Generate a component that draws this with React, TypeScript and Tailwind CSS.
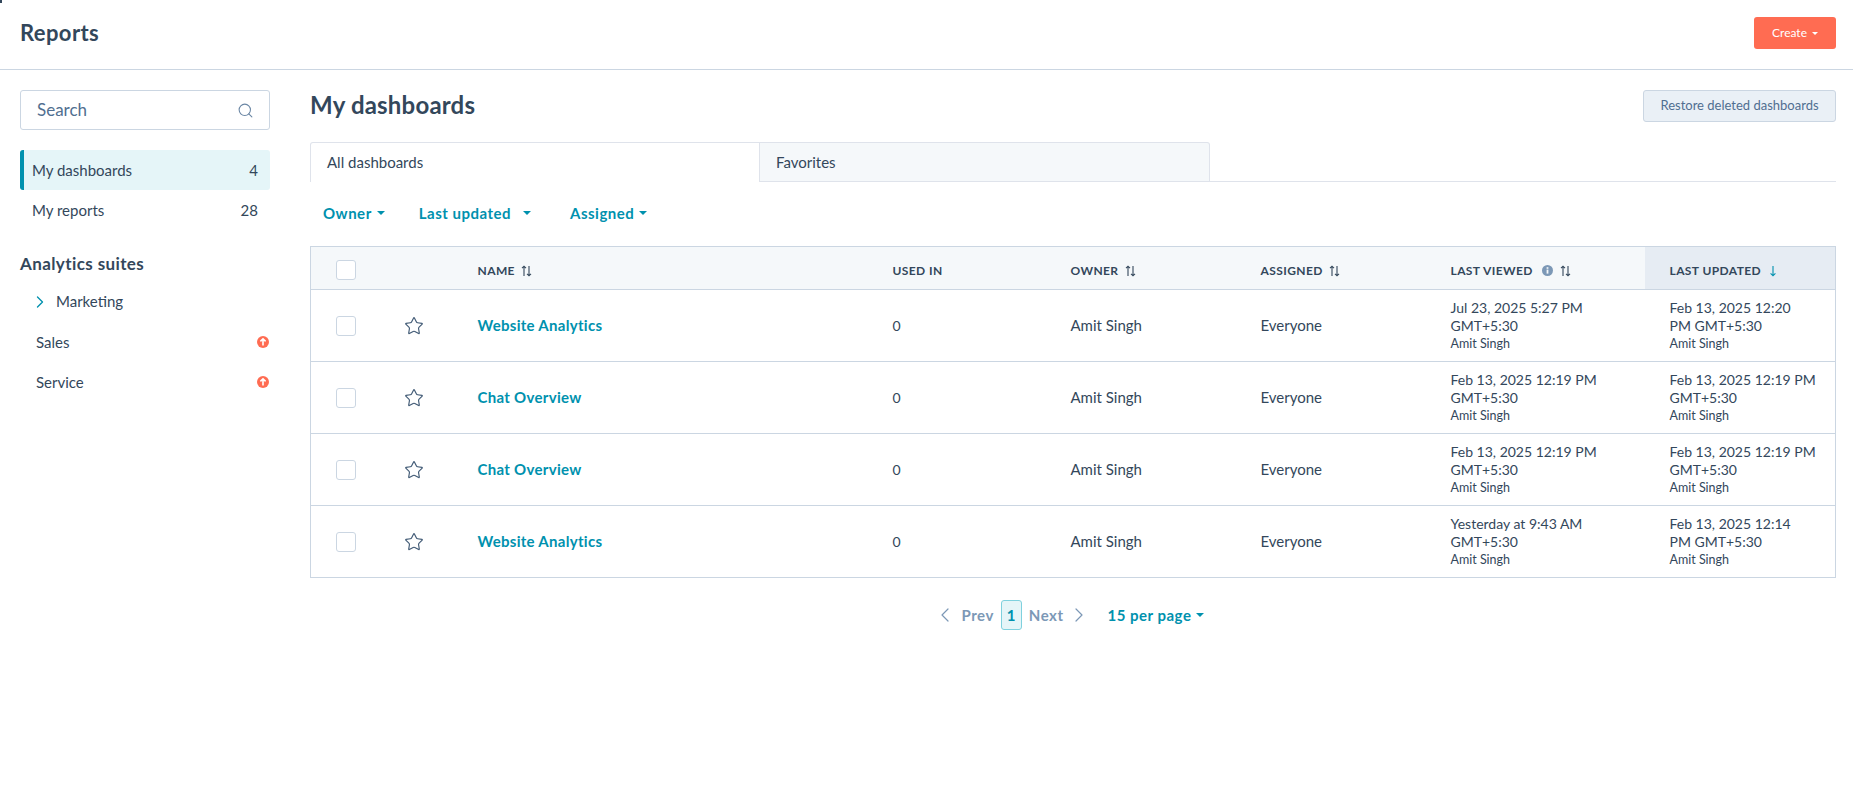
import { ChevronLeft, ChevronRight, Search, Star } from "lucide-react";

const font = "[font-family:Lato,'Liberation_Sans',sans-serif]";

interface Row {
    name: string;
    viewed: [string, string];
    updated: [string, string];
}

const rows: Row[] = [
    { name: "Website Analytics", viewed: ["Jul 23, 2025 5:27 PM", "GMT+5:30"], updated: ["Feb 13, 2025 12:20", "PM GMT+5:30"] },
    { name: "Chat Overview", viewed: ["Feb 13, 2025 12:19 PM", "GMT+5:30"], updated: ["Feb 13, 2025 12:19 PM", "GMT+5:30"] },
    { name: "Chat Overview", viewed: ["Feb 13, 2025 12:19 PM", "GMT+5:30"], updated: ["Feb 13, 2025 12:19 PM", "GMT+5:30"] },
    { name: "Website Analytics", viewed: ["Yesterday at 9:43 AM", "GMT+5:30"], updated: ["Feb 13, 2025 12:14", "PM GMT+5:30"] },
];

// small filled dropdown triangle
const Caret = ({ className = "" }: { className?: string }) => (
    <span className={`inline-block w-0 h-0 border-x-[4px] border-x-transparent border-t-[4px] border-t-current ${className}`} />
);

const SortIcon = () => (
    <svg width="11" height="12" viewBox="0 0 11 12" fill="none" stroke="#33475b" strokeWidth="1.1" className="ml-[6px] shrink-0">
        <path d="M3 11V1.2M1 3.2 3 1.2 5 3.2" />
        <path d="M8 1v9.8M6 8.8l2 2 2-2" />
    </svg>
);

const UpgradeBadge = () => (
    <svg width="12" height="12" viewBox="0 0 12 12" className="shrink-0">
        <circle cx="6" cy="6" r="6" fill="#ff6c52" />
        <path d="M6 9.6V3M3.4 5.4 6 2.8l2.6 2.6" stroke="#fff" strokeWidth="1.6" fill="none" />
    </svg>
);

const InfoIcon = () => (
    <svg width="11" height="11" viewBox="0 0 11 11" className="ml-[9px] mr-px shrink-0">
        <circle cx="5.5" cy="5.5" r="5.5" fill="#7c98b6" />
        <rect x="4.6" y="4.6" width="1.8" height="4" fill="#f5f8fa" />
        <rect x="4.6" y="2.2" width="1.8" height="1.6" fill="#f5f8fa" />
    </svg>
);

const Checkbox = () => <span className="block w-5 h-5 rounded-[3px] border border-[#cbd6e2] bg-white" />;

const HeaderLabel = ({ children }: { children: string }) => (
    <span className="text-[12px] font-bold uppercase tracking-[0.4px] text-[#33475b] whitespace-nowrap">{children}</span>
);

const Sidebar = () => (
    <aside className="w-[250px] shrink-0">
        <div className="flex items-center justify-between h-10 rounded-[3px] border border-[#cbd6e2] pl-4 pr-[15px]">
            <span className="text-[17px] text-[#516f90]">Search</span>
            <Search className="w-[17px] h-[17px] text-[#6a86a4]" strokeWidth={1.5} />
        </div>
        <div className="mt-5 flex items-center justify-between h-10 rounded-[3px] bg-[#e5f5f8] border-l-4 border-[#0091ae] pl-2 pr-3 text-[15px] text-[#33475b]">
            <span>My dashboards</span>
            <span>4</span>
        </div>
        <div className="flex items-center justify-between h-10 pl-3 pr-3 text-[15px] text-[#33475b]">
            <span>My reports</span>
            <span>28</span>
        </div>
        <h2 className="mt-[24px] text-[17px] leading-[20px] font-bold tracking-[0.4px] text-[#33475b]">Analytics suites</h2>
        <div className="mt-[7px] flex items-center h-[41px] pl-[10px] text-[15px] text-[#33475b]">
            <ChevronRight className="w-5 h-5 text-[#0091ae] mr-[6px]" strokeWidth={1.6} />
            <span>Marketing</span>
        </div>
        <div className="flex items-center justify-between h-10 pl-4 pr-px text-[15px] text-[#33475b]">
            <span>Sales</span>
            <UpgradeBadge />
        </div>
        <div className="flex items-center justify-between h-10 pl-4 pr-px text-[15px] text-[#33475b]">
            <span>Service</span>
            <UpgradeBadge />
        </div>
    </aside>
);

const Filters = () => (
    <div className="flex items-center h-[64px] pb-[2px] pl-[13px] text-[15px] font-bold tracking-[0.5px] text-[#0091ae]">
        <span>Owner</span>
        <Caret className="ml-[5px]" />
        <span className="ml-[34px]">Last updated</span>
        <Caret className="ml-[12px]" />
        <span className="ml-[39px]">Assigned</span>
        <Caret className="ml-[5px]" />
    </div>
);

const DashboardsTable = () => (
    <table className="w-full table-fixed border-collapse border border-[#cbd6e2]">
        <thead>
            <tr className="h-[43px] bg-[#f5f8fa] border-b border-[#cbd6e2] text-left">
                <th className="w-[70px] pl-[25px] pt-[3px] font-normal"><Checkbox /></th>
                <th className="w-[72px]" />
                <th className="w-[415px] pl-[25px] pt-[5px]">
                    <div className="flex items-center"><HeaderLabel>Name</HeaderLabel><SortIcon /></div>
                </th>
                <th className="w-[178px] pl-[25px] pt-[5px]">
                    <div className="flex items-center"><HeaderLabel>Used in</HeaderLabel></div>
                </th>
                <th className="w-[190px] pl-[25px] pt-[5px]">
                    <div className="flex items-center"><HeaderLabel>Owner</HeaderLabel><SortIcon /></div>
                </th>
                <th className="w-[190px] pl-[25px] pt-[5px]">
                    <div className="flex items-center"><HeaderLabel>Assigned</HeaderLabel><SortIcon /></div>
                </th>
                <th className="w-[219px] pl-[25px] pt-[5px]">
                    <div className="flex items-center"><HeaderLabel>Last viewed</HeaderLabel><InfoIcon /><SortIcon /></div>
                </th>
                <th className="pl-[25px] pt-[5px] bg-[#e6ecf3]">
                    <div className="flex items-center">
                        <HeaderLabel>Last updated</HeaderLabel>
                        <svg width="8" height="12" viewBox="0 0 8 12" fill="none" stroke="#0091ae" strokeWidth="1.1" className="ml-[8px]">
                            <path d="M4 1v9.8M1.6 8.4 4 10.8l2.4-2.4" />
                        </svg>
                    </div>
                </th>
            </tr>
        </thead>
        <tbody>
            {rows.map((row, i) => (
                <tr key={i} className="h-[72px] border-b border-[#cbd6e2] text-[14px] text-[#33475b]">
                    <td className="pl-[25px]"><Checkbox /></td>
                    <td className="pl-[23px]"><Star className="w-[20px] h-[20px] text-[#425b76]" strokeWidth={1.4} /></td>
                    <td className="pl-[25px] text-[15px] font-bold tracking-[0.3px] text-[#0091ae]">{row.name}</td>
                    <td className="pl-[25px]">0</td>
                    <td className="pl-[25px] text-[15px]">Amit Singh</td>
                    <td className="pl-[25px] text-[15px]">Everyone</td>
                    <td className="pl-[25px] leading-[18px] whitespace-nowrap">
                        <div>{row.viewed[0]}</div>
                        <div>{row.viewed[1]}</div>
                        <div className="text-[12.5px]">Amit Singh</div>
                    </td>
                    <td className="pl-[25px] leading-[18px] whitespace-nowrap">
                        <div>{row.updated[0]}</div>
                        <div>{row.updated[1]}</div>
                        <div className="text-[12.5px]">Amit Singh</div>
                    </td>
                </tr>
            ))}
        </tbody>
    </table>
);

const Pagination = () => (
    <div className="mt-[21px] flex items-center justify-center h-[32px] pr-[9px] text-[15px] font-bold tracking-[0.5px]">
        <ChevronLeft className="w-6 h-6 text-[#7c98b6]" strokeWidth={1.2} />
        <span className="ml-[5px] text-[#7c98b6]">Prev</span>
        <span className="ml-[7px] flex items-center justify-center w-[21px] h-[30px] rounded-[3px] border border-[#7fd1de] bg-[#e5f5f8] text-[#0091ae]">1</span>
        <span className="ml-[7px] text-[#7c98b6]">Next</span>
        <ChevronRight className="ml-[4px] w-6 h-6 text-[#7c98b6]" strokeWidth={1.2} />
        <span className="ml-[16px] text-[#0091ae]">15 per page</span>
        <Caret className="ml-[5px] text-[#0091ae]" />
    </div>
);

export default function App() {
    return (
        <div className={`relative min-h-[811px] bg-white ${font}`}>
            {/* dark speck in the window corner */}
            <span className="absolute top-0 left-0 w-[2px] h-[3px] bg-[#33475b]" />
            <header className="flex items-center justify-between h-[70px] border-b border-[#cbd6e2] pb-[3px] pl-5 pr-[17px]">
                <h1 className="text-[22px] pb-[2px] font-bold tracking-[0.4px] text-[#33475b]">Reports</h1>
                <button className="flex items-center justify-center w-[82px] h-8 rounded-[3px] bg-[#ff6c52] text-[12px] text-white">
                    Create
                    <span className="ml-[5px] inline-block w-0 h-0 border-x-[3px] border-x-transparent border-t-[3px] border-t-white" />
                </button>
            </header>
            <div className="flex pt-5 pl-5 pr-[17px]">
                <Sidebar />
                <main className="ml-10 flex-1 min-w-0">
                    <div className="flex items-center justify-between h-8">
                        <h2 className="text-[24px] font-bold tracking-[0.2px] pb-[2px] text-[#33475b]">My dashboards</h2>
                        <button className="w-[193px] h-8 rounded-[3px] border border-[#cbd6e2] bg-[#eaf0f6] text-[13px] text-[#506e91]">
                            Restore deleted dashboards
                        </button>
                    </div>
                    <div className="mt-5 flex h-10 border-b border-[#dfe3eb]">
                        <div className="w-[450px] h-10 flex items-center pl-4 rounded-tl-[3px] bg-white border-t border-x border-[#dfe3eb] text-[15px] text-[#33475b]">
                            All dashboards
                        </div>
                        <div className="w-[450px] h-10 flex items-center pl-4 rounded-tr-[3px] bg-[#f5f8fa] border-t border-r border-b border-[#dfe3eb] text-[15px] text-[#33475b]">
                            Favorites
                        </div>
                    </div>
                    <Filters />
                    <DashboardsTable />
                    <Pagination />
                </main>
            </div>
        </div>
    );
}
